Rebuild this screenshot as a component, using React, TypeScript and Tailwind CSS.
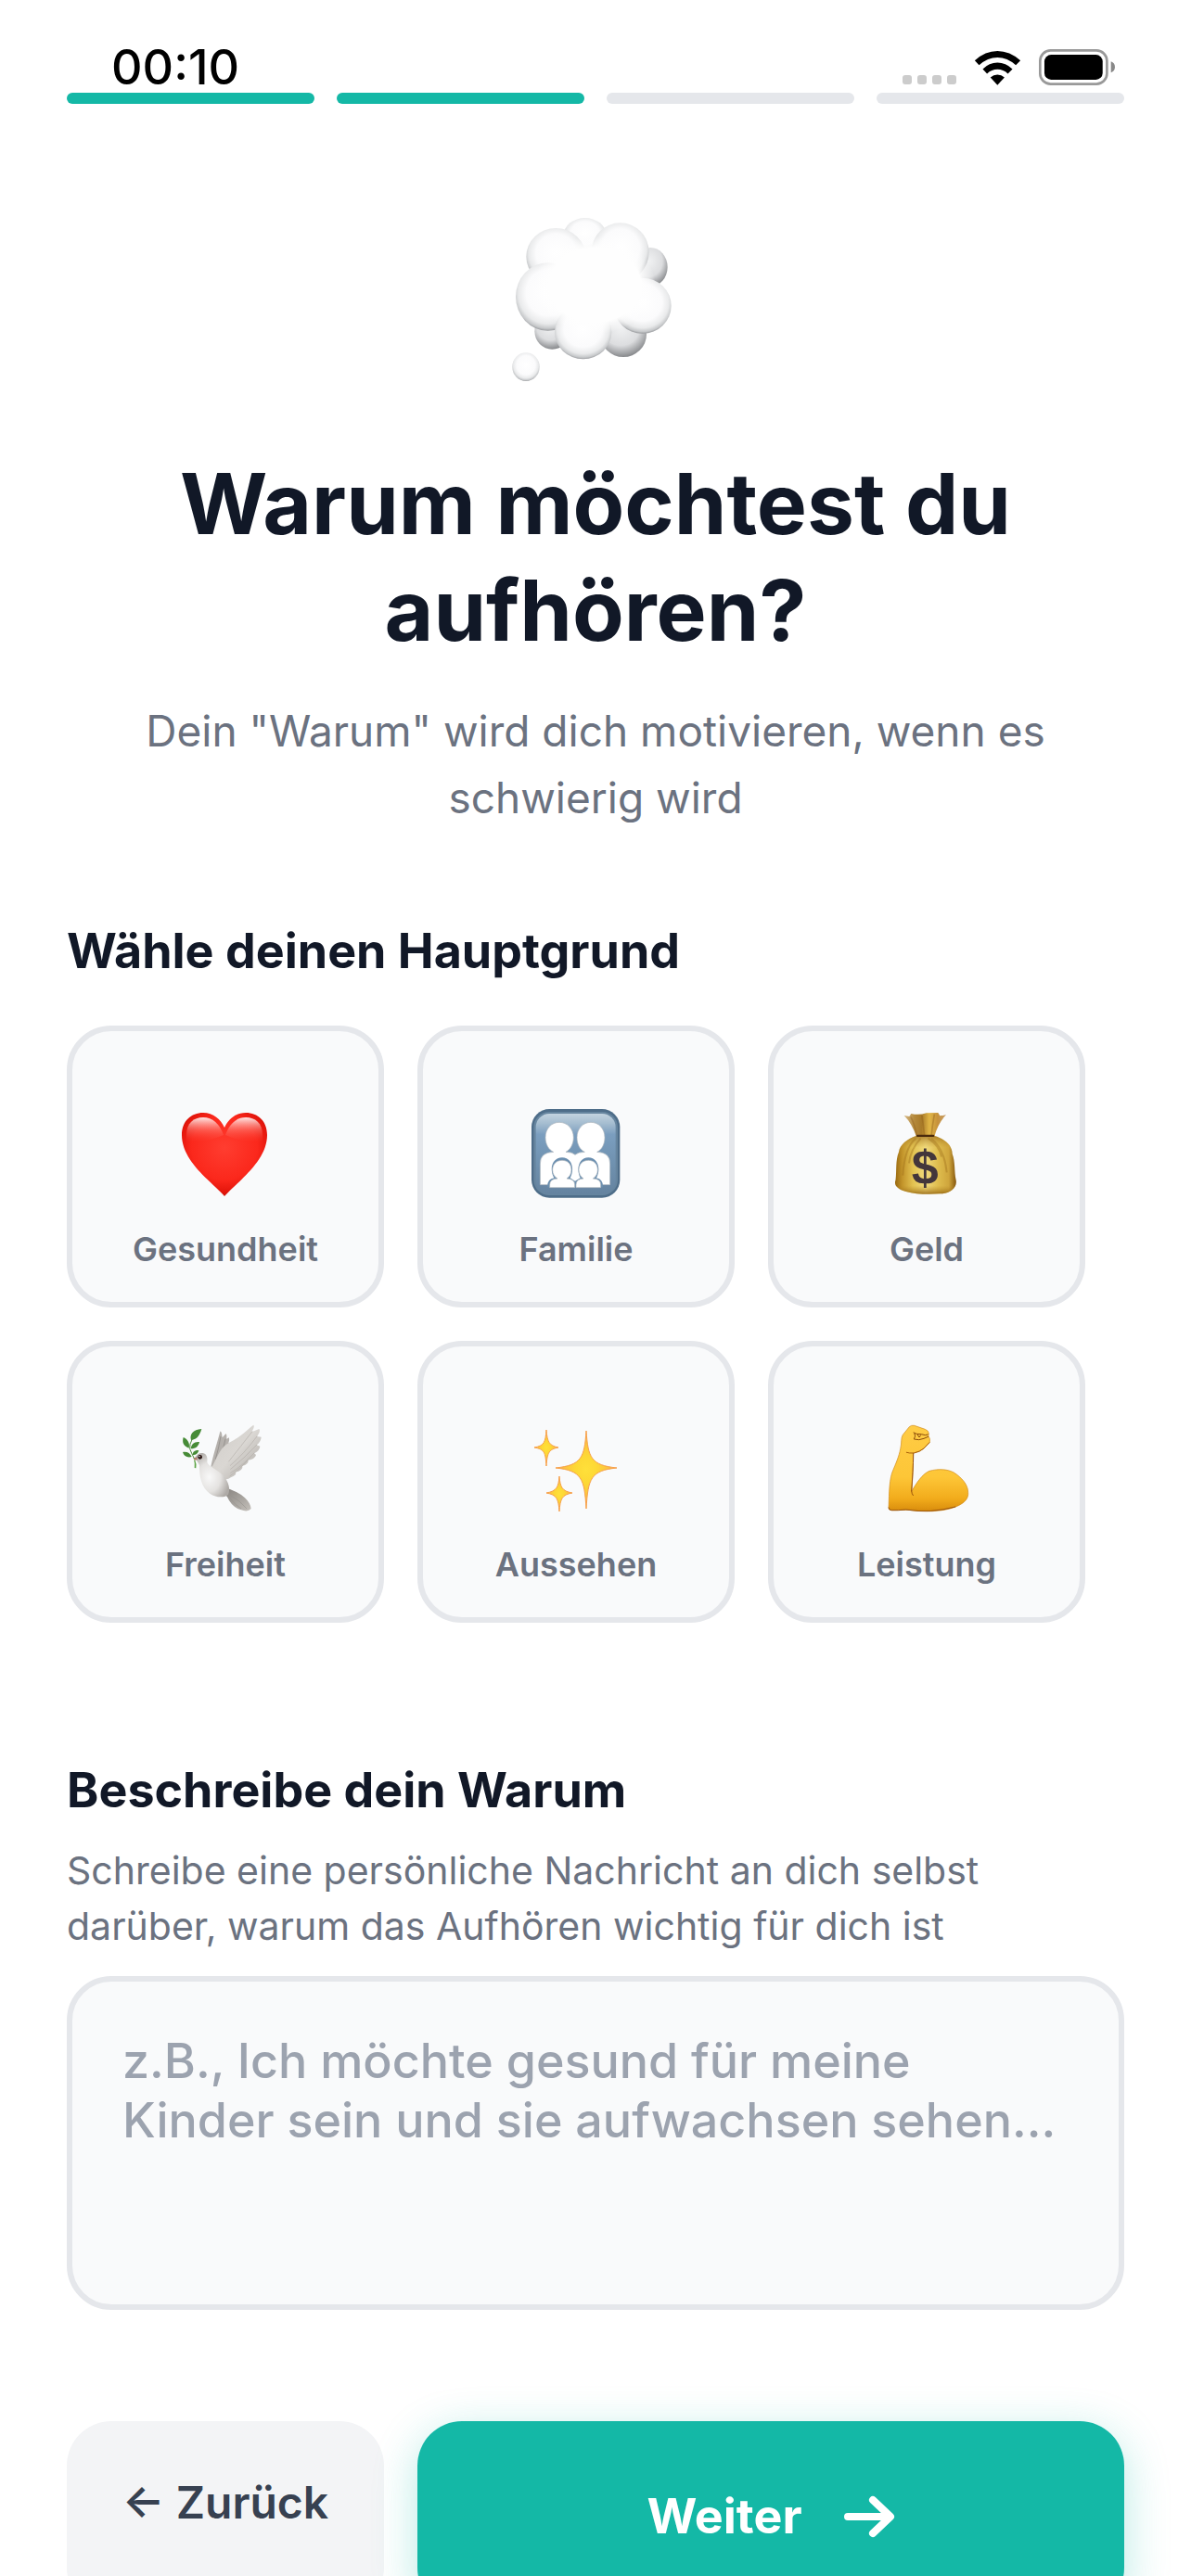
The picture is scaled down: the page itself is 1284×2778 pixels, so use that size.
import { useState, type ReactNode } from "react";

function WifiIcon() {
  return (
    <svg className="h-[37px] w-[51px]" viewBox="270 42 153 112" aria-hidden="true">
      <path d="M272 73Q306 42 346 42T421 73L406 88Q378 63 346 63T286 88Z" />
      <path d="M298 101Q319 80 346 80T395 101L380 116Q365 102 346 102T312 116Z" />
      <path d="M323 128Q333 119 346 119T369 128L346 153Z" />
    </svg>
  );
}

function BatteryIcon() {
  return (
    <svg className="h-[39px] w-[82px]" viewBox="480 39 247 117" aria-hidden="true">
      <rect x="484" y="43" width="217" height="109" rx="34" fill="none" stroke="#999" strokeWidth="8" />
      <rect x="498" y="57" width="189" height="81" rx="22" />
      <path d="M714 79Q727 84 727 97T714 115Z" fill="#888" />
    </svg>
  );
}

function ThoughtCloud() {
  return (
    <svg className="size-48" viewBox="138 81 576 576" aria-hidden="true">
      <defs>
        <radialGradient id="puff" cx="0.5" cy="0.44" r="0.56">
          <stop offset="0" stopColor="#fff" />
          <stop offset="0.6" stopColor="#fbfbfc" />
          <stop offset="0.82" stopColor="#e9eaeb" />
          <stop offset="0.94" stopColor="#c6c8ca" />
          <stop offset="1" stopColor="#9a9c9f" />
        </radialGradient>
        <radialGradient id="puffDark" cx="0.45" cy="0.35" r="0.66">
          <stop offset="0" stopColor="#f1f2f3" />
          <stop offset="0.6" stopColor="#dcdddf" />
          <stop offset="1" stopColor="#85878a" />
        </radialGradient>
        <radialGradient id="core">
          <stop offset="0" stopColor="#fefefe" />
          <stop offset="0.76" stopColor="#fefefe" />
          <stop offset="1" stopColor="#fefefe" stopOpacity="0" />
        </radialGradient>
      </defs>
      <ellipse cx="392" cy="160" rx="68" ry="55" fill="url(#puff)" />
      <ellipse cx="604" cy="264" rx="55" ry="63" fill="url(#puffDark)" />
      <ellipse cx="286" cy="472" rx="57" ry="58" fill="url(#puffDark)" />
      <ellipse cx="516" cy="482" rx="75" ry="73" fill="url(#puffDark)" />
      <ellipse cx="298" cy="230" rx="96" ry="92" fill="url(#puff)" />
      <ellipse cx="506" cy="216" rx="93" ry="95" fill="url(#puff)" />
      <ellipse cx="272" cy="360" rx="104" ry="110" fill="url(#puff)" />
      <ellipse cx="578" cy="389" rx="93" ry="90" fill="url(#puff)" />
      <ellipse cx="386" cy="474" rx="92" ry="88" fill="url(#puff)" />
      <ellipse cx="424" cy="322" rx="196" ry="158" fill="url(#core)" />
      <ellipse cx="201" cy="587" rx="44" ry="46" fill="url(#puff)" />
    </svg>
  );
}

function HeartIcon() {
  return (
    <svg className="size-24" viewBox="0 0 96 96" aria-hidden="true">
      <defs>
        <radialGradient id="heart" cx="0.5" cy="0.42" r="0.62">
          <stop offset="0" stopColor="#ff3d30" />
          <stop offset="0.62" stopColor="#fb281c" />
          <stop offset="0.86" stopColor="#e3150b" />
          <stop offset="1" stopColor="#b80c04" />
        </radialGradient>
        <linearGradient id="heartShine" x1="0" y1="0" x2="0" y2="1">
          <stop offset="0" stopColor="#fff" stopOpacity="0.9" />
          <stop offset="0.5" stopColor="#ffb0a8" stopOpacity="0.35" />
          <stop offset="1" stopColor="#ff4a3e" stopOpacity="0" />
        </linearGradient>
      </defs>
      <path d="M47 94C34 79 1 57 1 28 1 13 11 4 24 4 35 4 43 11 47 20 51 11 59 4 70 4 83 4 93 13 93 28 93 57 60 79 47 94Z" fill="url(#heart)" />
      <path d="M6 28C6 15 14 9 24 9 34 9 42 16 46 28 34 34 16 36 6 36Z" fill="url(#heartShine)" />
      <path d="M88 28C88 15 80 9 70 9 60 9 52 16 48 28 60 34 78 36 88 36Z" fill="url(#heartShine)" />
    </svg>
  );
}

function FamilyIcon() {
  return (
    <svg className="size-24" viewBox="39 45 288 288" aria-hidden="true">
      <defs>
        <linearGradient id="tile" x1="0" y1="0" x2="0" y2="1">
          <stop offset="0" stopColor="#c3d3e0" />
          <stop offset="0.12" stopColor="#a5bdd0" />
          <stop offset="0.26" stopColor="#7b9ebf" />
          <stop offset="0.6" stopColor="#7092b0" />
          <stop offset="1" stopColor="#6583a0" />
        </linearGradient>
      </defs>
      <rect x="39" y="45" width="286" height="287" rx="58" fill="#4e6d89" />
      <rect x="46" y="54" width="272" height="270" rx="50" fill="#66859f" />
      <rect x="53" y="60" width="258" height="260" rx="44" fill="url(#tile)" />
      <g fill="#fff" stroke="#a9b2ba" strokeWidth="2">
        <path d="M67 290V222Q67 185 110 184C94 176 84 158 84 137 84 108 104 88 129 88S175 108 175 137C175 158 165 176 150 184Q171 184 180 193 190 184 211 184C195 176 186 158 186 137 186 108 206 88 231 88S276 108 276 137C276 158 267 176 251 184Q293 185 293 222V290Z" />
      </g>
      <path d="M91 298Q89 272 112 268C95 238 107 202 138 202S180 238 164 268L180 278 197 268C182 238 193 202 223 202S265 238 249 268Q271 272 270 298Z" fill="#6b8fb0" />
      <g fill="#fff" stroke="#a9b2ba" strokeWidth="2">
        <path d="M98 299V290Q98 271 123 270C112 264 107 253 107 242 107 223 120 211 138 211S168 223 168 242C168 253 163 264 153 270Q179 271 179 290V299Z" />
        <path d="M183 299V290Q183 271 207 270C197 264 192 253 192 242 192 223 205 211 223 211S253 223 253 242C253 253 248 264 238 270Q263 271 263 290V299Z" />
      </g>
    </svg>
  );
}

function MoneyIcon() {
  return (
    <svg className="size-24" viewBox="453 345 288 288" aria-hidden="true">
      <defs>
        <linearGradient id="bag" x1="0" y1="0" x2="1" y2="0">
          <stop offset="0" stopColor="#98680f" />
          <stop offset="0.12" stopColor="#c3952b" />
          <stop offset="0.3" stopColor="#e3c352" />
          <stop offset="0.5" stopColor="#f0d97c" />
          <stop offset="0.7" stopColor="#dfbd4e" />
          <stop offset="0.88" stopColor="#cfa53c" />
          <stop offset="1" stopColor="#85560d" />
        </linearGradient>
        <linearGradient id="bagShade" x1="0" y1="0" x2="0" y2="1">
          <stop offset="0" stopColor="#8e5a10" stopOpacity="0.65" />
          <stop offset="0.2" stopColor="#b98a26" stopOpacity="0" />
          <stop offset="0.85" stopColor="#b98a26" stopOpacity="0" />
          <stop offset="1" stopColor="#8a5a0c" stopOpacity="0.8" />
        </linearGradient>
        <linearGradient id="neck" x1="0" y1="0" x2="1" y2="0">
          <stop offset="0" stopColor="#d5b885" />
          <stop offset="0.25" stopColor="#b4883a" />
          <stop offset="0.42" stopColor="#a87a28" />
          <stop offset="0.6" stopColor="#e0b545" />
          <stop offset="0.8" stopColor="#c6913a" />
          <stop offset="1" stopColor="#c8a070" />
        </linearGradient>
      </defs>
      <path d="M524 366L541 369 547 360Q572 366 596 358L634 357 640 367 660 364Q633 392 622 434H564Q549 391 524 366Z" fill="url(#neck)" />
      <path d="M566 432Q558 395 546 371M590 432Q586 395 582 366M612 432Q616 395 622 362" fill="none" stroke="#8f5c18" strokeOpacity="0.4" strokeWidth="5" />
      <path d="M563 432H622C652 440 680 460 680 490 690 515 686 550 692 575 697 600 670 620 640 619 605 622 560 621 530 612 508 606 490 594 496 577 501 550 495 512 507 484 509 461 536 440 563 432Z" fill="url(#bag)" />
      <path d="M563 432H622C652 440 680 460 680 490 690 515 686 550 692 575 697 600 670 620 640 619 605 622 560 621 530 612 508 606 490 594 496 577 501 550 495 512 507 484 509 461 536 440 563 432Z" fill="url(#bagShade)" />
      <path d="M562 440Q525 470 520 560M578 440Q545 475 540 520M612 440Q655 475 662 550M602 440Q640 465 645 500" fill="none" stroke="#9d6f18" strokeOpacity="0.4" strokeWidth="6" />
      <rect x="564" y="428" width="58" height="7" rx="3" fill="#4a2a0c" />
      <text x="592" y="587" textAnchor="middle" fill="#43363b" className="font-['Liberation_Sans',sans-serif] text-[156px] font-bold">$</text>
    </svg>
  );
}

function DoveIcon() {
  return (
    <svg className="size-24" viewBox="45 45 288 288" aria-hidden="true">
      <defs>
        <linearGradient id="wing" x1="0" y1="0" x2="1" y2="1">
          <stop offset="0" stopColor="#d0cdc9" />
          <stop offset="0.5" stopColor="#dad7d3" />
          <stop offset="1" stopColor="#aaa6a1" />
        </linearGradient>
        <radialGradient id="doveBody" cx="0.42" cy="0.55" r="0.6">
          <stop offset="0" stopColor="#f8f8f8" />
          <stop offset="0.55" stopColor="#e4e2e0" />
          <stop offset="1" stopColor="#aeaaa6" />
        </radialGradient>
        <linearGradient id="tail" x1="0" y1="0" x2="1" y2="1">
          <stop offset="0" stopColor="#85817d" />
          <stop offset="1" stopColor="#c4c0ba" />
        </linearGradient>
      </defs>
      <path d="M142 182C148 150 160 112 172 68Q177 66 179 88L190 76Q194 76 193 92L201 88Q203 96 199 106L212 104 180 180Z" fill="#b5b1ad" />
      <path d="M157 158Q168 120 174 84M168 160Q184 125 189 92" stroke="#989490" strokeWidth="3" fill="none" />
      <path d="M178 262L202 254Q234 266 252 283 270 300 272 318 262 330 240 322 210 314 195 280Z" fill="url(#tail)" />
      <path d="M206 276Q235 290 258 318M202 282Q220 306 240 318" stroke="#96928d" strokeOpacity="0.6" strokeWidth="3" fill="none" />
      <path d="M144 186C164 150 172 118 204 103 238 86 260 62 280 47 284 54 278 62 274 70L298 60C303 66 296 78 291 84L305 86C304 98 296 108 290 112L301 116C299 128 290 136 282 138L288 144C284 156 272 160 262 161 266 170 254 178 244 180 246 192 232 198 222 200 226 210 212 214 204 218 190 228 170 222 160 206Z" fill="url(#wing)" />
      <path d="M200 165Q240 115 276 68M205 178Q250 140 291 84M206 190Q250 155 290 112M206 202Q244 180 282 138M204 212Q236 190 262 161" stroke="#b0aca7" strokeOpacity="0.6" strokeWidth="3" fill="none" strokeLinecap="round" />
      <path d="M90 155C96 142 106 137 116 138 128 140 132 152 130 166 130 180 160 190 182 210 200 232 206 256 198 272 190 282 160 284 140 270 112 252 104 214 105 178 102 170 98 162 90 155Z" fill="url(#doveBody)" />
      <circle cx="107" cy="151" r="7" fill="#2a1512" />
      <circle cx="105" cy="149" r="2" fill="#fff" />
      <path d="M85 155L95 151 99 159 90 161Z" fill="#b57a6c" />
      <path d="M91 161Q97 175 94 187L89 186Q91 172 87 160Z" fill="#5fa548" />
      <path d="M88 156Q76 130 74 124 72 110 82 92" stroke="#4f8f3a" strokeWidth="3" fill="none" />
      <g fill="#478b37">
        <path d="M78 96C72 78 84 62 112 60 106 80 98 94 78 96Z" />
        <path d="M71 122C54 116 48 104 53 87 66 92 75 106 71 122Z" />
        <path d="M77 124C78 110 88 100 105 102 102 116 94 124 77 124Z" />
        <path d="M80 150C66 154 54 148 51 135 66 133 74 138 80 150Z" />
        <path d="M83 144C83 132 92 128 103 129 100 140 94 144 83 144Z" />
      </g>
    </svg>
  );
}

function SparklesIcon() {
  return (
    <svg className="size-24" viewBox="0 0 96 96" aria-hidden="true">
      <defs>
        <radialGradient id="spark">
          <stop offset="0" stopColor="#ffe03a" />
          <stop offset="0.35" stopColor="#fdd835" />
          <stop offset="1" stopColor="#fbb04a" />
        </radialGradient>
      </defs>
      <g fill="url(#spark)" stroke="#f7a04a" strokeWidth="1" strokeLinejoin="round">
        <path d="M59 7C61 36 64 44 92 47 64 50 61 58 59 91 57 58 54 50 26 47 54 44 57 36 59 7Z" />
        <path d="M16 6C17 19 19 23 29 25 19 27 17 30 16 45 15 30 14 27 3 25 14 23 15 19 16 6Z" />
        <path d="M30 56C31 68 33 72 44 74 33 76 31 80 30 94 29 80 27 76 16 74 27 72 29 68 30 56Z" />
      </g>
    </svg>
  );
}

function MuscleIcon() {
  return (
    <svg className="size-24" viewBox="453 315 288 288" aria-hidden="true">
      <defs>
        <linearGradient id="arm" x1="0" y1="0" x2="0" y2="1">
          <stop offset="0" stopColor="#ffcc45" />
          <stop offset="0.6" stopColor="#fdc637" />
          <stop offset="0.85" stopColor="#f2ac1c" />
          <stop offset="1" stopColor="#d88c0c" />
        </linearGradient>
      </defs>
      <path d="M474 585C476 560 474 505 485 472 500 435 507 420 512 395 517 375 513 360 520 349L541 323Q547 317 557 319L592 331Q604 336 604 345L603 353Q609 360 607 373L588 393Q575 405 554 408C554 450 551 490 549 531 563 507 583 475 606 466 635 458 665 460 685 471 710 487 731 510 731 535 733 555 720 568 700 578 665 595 610 600 555 594 530 589 505 594 484 593Q474 592 474 585Z" fill="url(#arm)" stroke="#d08a18" strokeWidth="2" />
      <path d="M554 409C554 450 551 490 548 531M548 531Q549 541 553 545M474 585Q474 593 484 593 505 594 530 591 610 604 690 582" fill="none" stroke="#99520b" strokeWidth="3" strokeLinecap="round" />
      <path d="M532 406Q540 409 556 408 575 404 588 393L606 374" fill="none" stroke="#a85f0a" strokeWidth="3" strokeLinecap="round" />
      <path d="M555 342Q562 348 580 347L592 350 601 348M558 345Q563 353 556 363 572 368 588 361L602 355M568 349L573 357 578 350" fill="none" stroke="#8a4a0a" strokeWidth="3" strokeLinecap="round" strokeLinejoin="round" />
    </svg>
  );
}

const reasons: { label: string; icon: ReactNode }[] = [
  { label: "Gesundheit", icon: <HeartIcon /> },
  { label: "Familie", icon: <FamilyIcon /> },
  { label: "Geld", icon: <MoneyIcon /> },
  { label: "Freiheit", icon: <DoveIcon /> },
  { label: "Aussehen", icon: <SparklesIcon /> },
  { label: "Leistung", icon: <MuscleIcon /> },
];

const steps = [true, true, false, false];

export default function App() {
  const [reason, setReason] = useState<string | null>(null);
  return (
    <div className="h-screen overflow-hidden bg-white font-['Inter',sans-serif] text-[#111827]">
      <header className="flex h-[100px] items-end justify-between pr-[82px] pl-[120px] text-black">
        <time className="text-[52px] leading-[54px] font-medium">00:10</time>
        <div className="flex items-end pb-2">
          <div className="mr-[19px] mb-px flex gap-1.5">
            {[0, 1, 2, 3].map((dot) => (
              <span key={dot} className="size-2.5 rounded-[3px] bg-[#ccc]" />
            ))}
          </div>
          <div className="mr-[19px]">
            <WifiIcon />
          </div>
          <BatteryIcon />
        </div>
      </header>

      <main className="px-[72px]">
        <div className="flex gap-6" role="progressbar" aria-label="Fortschritt" aria-valuemin={0} aria-valuemax={4} aria-valuenow={2}>
          {steps.map((done, i) => (
            <span key={i} className={done ? "h-3 flex-1 rounded-full bg-[#14b8a6]" : "h-3 flex-1 rounded-full bg-[#e5e7eb]"} />
          ))}
        </div>

        <div className="mt-[115px] flex justify-center">
          <ThoughtCloud />
        </div>
        <h1 className="mt-[67px] text-center text-[91px] leading-[115px] font-bold">
          Warum möchtest du
          <br />
          aufhören?
        </h1>
        <p className="mt-9 text-center text-[46px] leading-[72px] text-[#6b7280]">
          Dein "Warum" wird dich motivieren, wenn es
          <br />
          schwierig wird
        </p>

        <h2 className="mt-[98px] text-[52px] leading-[64px] font-bold">Wähle deinen Hauptgrund</h2>
        <div className="mt-12 flex flex-wrap gap-9">
          {reasons.map(({ label, icon }) => (
            <button
              key={label}
              type="button"
              aria-pressed={reason === label}
              onClick={() => setReason(label)}
              className="flex w-[30%] flex-col items-center gap-[31px] rounded-[48px] border-[6px] border-[#e5e7eb] bg-[#f9fafb] pt-[84px] pb-[33px] aria-pressed:border-[#14b8a6]"
            >
              {icon}
              <span className="text-[36px] leading-[48px] font-semibold text-[#6b7280]">{label}</span>
            </button>
          ))}
        </div>

        <h2 className="mt-[149px] text-[52px] leading-[64px] font-bold">
          <label htmlFor="why">Beschreibe dein Warum</label>
        </h2>
        <p id="why-hint" className="mt-6 text-[41px] leading-[60px] text-[#6b7280]">
          Schreibe eine persönliche Nachricht an dich selbst
          <br />
          darüber, warum das Aufhören wichtig für dich ist
        </p>
        <textarea
          id="why"
          aria-describedby="why-hint"
          placeholder="z.B., Ich möchte gesund für meine Kinder sein und sie aufwachsen sehen..."
          className="mt-6 block h-[360px] w-full resize-none rounded-[48px] border-[6px] border-[#e5e7eb] bg-[#f9fafb] p-[54px] text-[52px] leading-[64px] font-medium placeholder:text-[#9ca3af]"
        />

        <div className="mt-[120px] flex items-start gap-9">
          <button type="button" className="h-[206px] w-[30%] rounded-[48px] bg-[#f3f4f6] pb-[30px] text-[48px] leading-[60px] font-semibold text-[#374151]">
            ← Zurück
          </button>
          <button
            type="button"
            className="flex h-[206px] flex-1 items-center justify-center gap-11 rounded-[48px] bg-[#14b8a6] text-[52px] leading-[64px] font-bold text-white shadow-[0_12px_48px_rgba(20,184,166,0.3)]"
          >
            Weiter
            <svg className="h-[46px] w-14" viewBox="0 0 56 46" fill="none" stroke="currentColor" strokeWidth="8" strokeLinecap="round" strokeLinejoin="round" aria-hidden="true">
              <path d="M5 23H50M32 5L51 23 32 41" />
            </svg>
          </button>
        </div>
      </main>
    </div>
  );
}
